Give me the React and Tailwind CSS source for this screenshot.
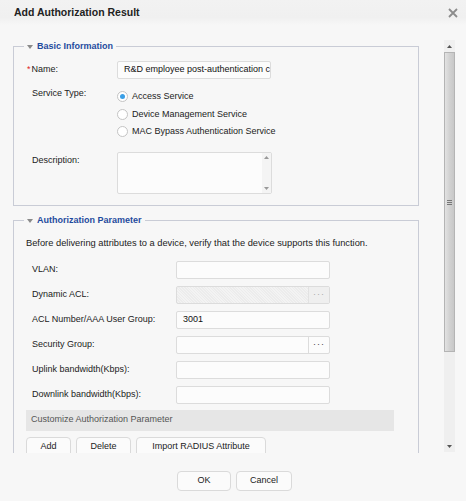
import { useState } from "react";

const sans = "font-['Liberation_Sans',Arial,sans-serif]";

function Legend({ children }) {
  return (
    <legend className="ml-[10px] px-[3px] h-[13px] flex items-center gap-[4px]">
      <svg width="6" height="4" viewBox="0 0 6 4" className="mt-[1px]">
        <path d="M0 0h6L3 4z" fill="#8a8a8a" />
      </svg>
      <span className="text-[9px] leading-[13px] font-bold text-[#1f4b9e]">{children}</span>
    </legend>
  );
}

function TextBox({ value, className = "" }) {
  return (
    <div
      className={`w-[154px] h-[18px] border border-[#dcdcdc] rounded-[2px] bg-[#fcfcfc] flex items-center px-[6px] text-[9px] text-[#111] whitespace-nowrap overflow-hidden ${className}`}
    >
      {value}
    </div>
  );
}

function PickerBox({ disabled }) {
  return (
    <div
      className={`w-[154px] h-[18px] border border-[#dcdcdc] rounded-[2px] flex ${
        disabled
          ? "bg-[repeating-linear-gradient(45deg,#ececec_0px,#ececec_1px,#f3f3f3_1px,#f3f3f3_2px)]"
          : "bg-[#fcfcfc]"
      }`}
    >
      <div className="flex-1" />
      <div
        className={`w-[21px] h-full flex items-center justify-center text-[9px] leading-none tracking-[1px] ${
          disabled ? "border-l border-[#e2e2e2] text-[#aaa] bg-[#efefef]" : "border-l border-[#dcdcdc] text-[#444]"
        }`}
      >
        ···
      </div>
    </div>
  );
}

function Radio({ checked, label, onClick }) {
  return (
    <div className="h-[17.5px] flex items-center gap-[4px] cursor-pointer" onClick={onClick}>
      <span className="w-[11px] h-[11px] rounded-full border border-[#c4c4c4] bg-white flex items-center justify-center">
        {checked && <span className="w-[5px] h-[5px] rounded-full bg-[#3a9fe6]" />}
      </span>
      <span className="text-[9px] text-[#222]">{label}</span>
    </div>
  );
}

function FieldRow({ label, children }) {
  return (
    <div className="flex items-center h-[18px] ml-[6px]">
      <span className="w-[144px] text-[9px] text-[#222]">{label}</span>
      {children}
    </div>
  );
}

function Btn({ children, className = "" }) {
  return (
    <button
      className={`h-[20px] border border-[#dadada] rounded-[4px] bg-[#fbfbfb] text-[9px] text-[#222] flex items-center justify-center ${className}`}
    >
      {children}
    </button>
  );
}

export default function App() {
  const [service, setService] = useState(0);
  const services = ["Access Service", "Device Management Service", "MAC Bypass Authentication Service"];

  return (
    <div className={`w-[466px] h-[501px] bg-[#f7f7f7] overflow-hidden ${sans}`}>
      {/* title bar */}
      <div className="h-[25px] flex items-center justify-between pl-[14px] pr-[8px] bg-[linear-gradient(#f2f2f2,#f0f0f0_70%,#f7f7f7)]">
        <span className="text-[10.5px] font-bold text-[#222]">Add Authorization Result</span>
        <svg width="10" height="10" viewBox="0 0 10 10">
          <path d="M1 1l8 8M9 1L1 9" stroke="#8c8c8c" strokeWidth="1.8" />
        </svg>
      </div>

      {/* scroll area */}
      <div className="h-[428px] flex">
        <div className="w-[431px] overflow-hidden pt-[15px]">
          <fieldset className="ml-[13px] w-[406px] border border-[#c9ccd6] pb-[11px]">
            <Legend>Basic Information</Legend>
            <div className="pt-[8px] pl-[18px]">
              <div className="flex items-center h-[18px]">
                <span className="w-[85px] text-[9px] text-[#222]">
                  <span className="text-[#e0261c] -ml-[5px] mr-[1px]">*</span>Name:
                </span>
                <TextBox value="R&D employee post-authentication c" />
              </div>
              <div className="flex mt-[9px]">
                <span className="w-[85px] text-[9px] leading-[12px] text-[#222] mt-[-1px]">Service Type:</span>
                <div>
                  {services.map((s, i) => (
                    <Radio key={s} label={s} checked={service === i} onClick={() => setService(i)} />
                  ))}
                </div>
              </div>
              <div className="flex mt-[11px]">
                <span className="w-[85px] text-[9px] leading-[12px] text-[#222] pt-[2px]">Description:</span>
                <div className="w-[155px] h-[42px] border border-[#dcdcdc] rounded-[2px] bg-[#fcfcfc] flex justify-end">
                  <div className="w-[9px] h-full bg-[#f4f4f4] flex flex-col items-center justify-between py-[3px]">
                    <svg width="5" height="3" viewBox="0 0 5 3">
                      <path d="M0 3h5L2.5 0z" fill="#999" />
                    </svg>
                    <svg width="5" height="3" viewBox="0 0 5 3">
                      <path d="M0 0h5L2.5 3z" fill="#999" />
                    </svg>
                  </div>
                </div>
              </div>
            </div>
          </fieldset>

          <fieldset className="ml-[13px] w-[406px] border border-[#c9ccd6] mt-[8px] pb-[20px]">
            <Legend>Authorization Parameter</Legend>
            <div className="pl-[12px]">
              <p className="mt-[10px] text-[9.3px] leading-[12px] text-[#222]">
                Before delivering attributes to a device, verify that the device supports this function.
              </p>
              <div className="mt-[12px] flex flex-col gap-[7px]">
                <FieldRow label="VLAN:">
                  <TextBox />
                </FieldRow>
                <FieldRow label="Dynamic ACL:">
                  <PickerBox disabled />
                </FieldRow>
                <FieldRow label="ACL Number/AAA User Group:">
                  <TextBox value="3001" />
                </FieldRow>
                <FieldRow label="Security Group:">
                  <PickerBox />
                </FieldRow>
                <FieldRow label="Uplink bandwidth(Kbps):">
                  <TextBox />
                </FieldRow>
                <FieldRow label="Downlink bandwidth(Kbps):">
                  <TextBox />
                </FieldRow>
              </div>
              <div className="mt-[6px] w-[368px] h-[21px] bg-[#e6e6e6] flex items-center pl-[5px] text-[9px] text-[#555]">
                Customize Authorization Parameter
              </div>
              <div className="mt-[6px] flex gap-[5px]">
                <Btn className="w-[45px]">Add</Btn>
                <Btn className="w-[55px]">Delete</Btn>
                <Btn className="w-[130px]">Import RADIUS Attribute</Btn>
              </div>
            </div>
          </fieldset>
        </div>

        {/* scrollbar */}
        <div className="ml-[13px] w-[11px] pt-[15px] flex flex-col">
          <div className="h-[12px] bg-[#f0f0f0] flex items-center justify-center">
            <svg width="5" height="3" viewBox="0 0 5 3">
              <path d="M0 3h5L2.5 0z" fill="#555" />
            </svg>
          </div>
          <div className="h-[300px] border border-[#b4b4b4] bg-[linear-gradient(90deg,#e2e2e2,#d2d2d2_50%,#c8c8c8)] flex items-center justify-center">
            <div className="flex flex-col gap-[1px]">
              <span className="w-[5px] h-px bg-[#777]" />
              <span className="w-[5px] h-px bg-[#777]" />
              <span className="w-[5px] h-px bg-[#777]" />
            </div>
          </div>
          <div className="h-[88px] bg-[#efefef]" />
          <div className="h-[12px] bg-[#efefef] flex items-center justify-center">
            <svg width="5" height="3" viewBox="0 0 5 3">
              <path d="M0 0h5L2.5 3z" fill="#555" />
            </svg>
          </div>
        </div>
      </div>

      {/* footer */}
      <div className="mt-[18px] flex justify-center gap-[5px] pl-[3px]">
        <Btn className="w-[54px]">OK</Btn>
        <Btn className="w-[56px]">Cancel</Btn>
      </div>
    </div>
  );
}
